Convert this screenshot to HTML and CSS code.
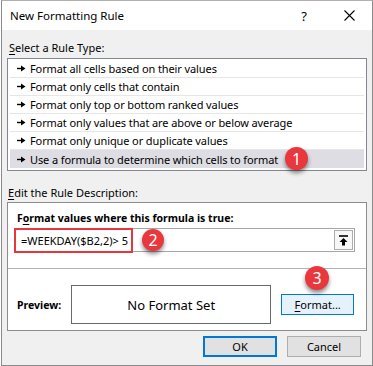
FILE: index.html
```html
<!DOCTYPE html>
<html>
    <head>
        <title>New Formatting Rule</title>
        <link rel="stylesheet" href="styles.css">
    </head>
    <body>
        <div class="dialog">
            <div class="titlebar">
                <span class="title">New Formatting Rule</span>
                <span class="tb-btn help">?</span>
                <span class="tb-btn close">
                    <svg width="11" height="11" viewBox="0 0 11 11"><path d="M0.5 0.5L10.5 10.5M10.5 0.5L0.5 10.5" stroke="#000" stroke-width="1.1"/></svg>
                </span>
            </div>
            <div class="content">
                <div class="label label-first"><u>S</u>elect a Rule Type:</div>
                <div class="rule-list">
                    <div class="rule">
                        <svg class="arrow" width="9" height="7" viewBox="0 0 9 7"><path d="M0 3.5H5" stroke="#000" stroke-width="1.4"/><path d="M4 0.5L8.5 3.5L4 6.5Z" fill="#000"/></svg>
                        <span>Format all cells based on their values</span>
                    </div>
                    <div class="rule">
                        <svg class="arrow" width="9" height="7" viewBox="0 0 9 7"><path d="M0 3.5H5" stroke="#000" stroke-width="1.4"/><path d="M4 0.5L8.5 3.5L4 6.5Z" fill="#000"/></svg>
                        <span>Format only cells that contain</span>
                    </div>
                    <div class="rule">
                        <svg class="arrow" width="9" height="7" viewBox="0 0 9 7"><path d="M0 3.5H5" stroke="#000" stroke-width="1.4"/><path d="M4 0.5L8.5 3.5L4 6.5Z" fill="#000"/></svg>
                        <span>Format only top or bottom ranked values</span>
                    </div>
                    <div class="rule">
                        <svg class="arrow" width="9" height="7" viewBox="0 0 9 7"><path d="M0 3.5H5" stroke="#000" stroke-width="1.4"/><path d="M4 0.5L8.5 3.5L4 6.5Z" fill="#000"/></svg>
                        <span>Format only values that are above or below average</span>
                    </div>
                    <div class="rule">
                        <svg class="arrow" width="9" height="7" viewBox="0 0 9 7"><path d="M0 3.5H5" stroke="#000" stroke-width="1.4"/><path d="M4 0.5L8.5 3.5L4 6.5Z" fill="#000"/></svg>
                        <span>Format only unique or duplicate values</span>
                    </div>
                    <div class="rule selected">
                        <svg class="arrow" width="9" height="7" viewBox="0 0 9 7"><path d="M0 3.5H5" stroke="#000" stroke-width="1.4"/><path d="M4 0.5L8.5 3.5L4 6.5Z" fill="#000"/></svg>
                        <span>Use a formula to determine which cells to format</span>
                        <span class="badge badge-1">1</span>
                    </div>
                </div>

                <div class="label label-second"><u>E</u>dit the Rule Description:</div>
                <div class="desc-box">
                    <div class="formula-part">
                        <div class="bold-label">F<u>o</u>rmat values where this formula is true:</div>
                        <div class="formula-input">
                            <span class="formula-text">=WEEKDAY($B2,2)&gt; 5</span>
                            <span class="ref-btn">
                                <svg width="11" height="11" viewBox="0 0 11 11"><path d="M1 1H10" stroke="#000" stroke-width="1.6"/><path d="M5.5 3L1.5 7H4V10.5H7V7H9.5Z" fill="#000"/></svg>
                            </span>
                            <span class="highlight"></span>
                            <span class="badge badge-2">2</span>
                        </div>
                    </div>
                    <div class="preview-part">
                        <span class="bold-label">Preview:</span>
                        <div class="preview-box">No Format Set</div>
                        <button class="btn btn-format"><u>F</u>ormat...</button>
                        <span class="badge badge-3">3</span>
                    </div>
                </div>

                <div class="footer">
                    <button class="btn btn-default">OK</button>
                    <button class="btn">Cancel</button>
                </div>
            </div>
        </div>
    </body>
</html>
```
FILE: styles.css
```css
body {
    margin: 0;
    background-color: #ffffff;
    font-family: 'Noto Sans', 'Liberation Sans', sans-serif;
    font-size: 11px;
    color: #000000;
}
u {
    text-decoration-thickness: 1px;
    text-underline-offset: 2px;
}


.dialog {
    position: relative;
    width: 370px;
    height: 364px;
    margin-left: 1px;
    border: 1px solid #8a8a8a;
    border-top-color: #b0b0b0;
    background-color: #f0f0f0;
}
.titlebar {
    display: flex;
    align-items: center;
    height: 29px;
    padding-left: 8px;
    background-color: #ffffff;
}
.title {
    flex: 1;
    font-size: 11.5px;
}
.tb-btn {
    display: flex;
    align-items: center;
    justify-content: center;
    height: 29px;
}
.help {
    width: 44px;
    font-size: 13px;
}
.close {
    width: 46px;
}


.content {
    padding: 0 5px;
}
.label {
    line-height: 16px;
    padding-left: 2px;
}
.label-first {
    margin-top: 10px;
    margin-bottom: 2px;
}
.label-second {
    margin-top: 14px;
    margin-bottom: 1px;
    padding-left: 1px;
}


.rule-list {
    background-color: #ffffff;
    border: 1px solid #828790;
    padding: 1px 2px 2px;
}
.rule {
    position: relative;
    display: flex;
    align-items: center;
    gap: 4px;
    height: 17px;
    padding-left: 7px;
    border-bottom: 1px solid #e6e6e6;
    letter-spacing: -0.1px;
}
.rule.selected {
    height: 18px;
    border-bottom: none;
    background-color: #dddde3;
}
.arrow {
    flex: none;
}


.desc-box {
    background-color: #ffffff;
    border: 1px solid #8c8c8c;
}
.bold-label {
    font-weight: bold;
    font-size: 10.5px;
    line-height: 16px;
}
.formula-part {
    padding: 7px 11px 16px 6px;
}
.formula-part > .bold-label {
    padding-left: 3px;
    margin-bottom: 2px;
}
.formula-input {
    position: relative;
    display: flex;
    align-items: center;
    height: 22px;
    border: 1px solid #a6a6a6;
}
.formula-text {
    flex: 1;
    padding-left: 6px;
}
.ref-btn {
    display: flex;
    align-items: center;
    justify-content: center;
    width: 19px;
    height: 20px;
    margin-right: 1px;
    border: 1px solid #adadad;
    box-sizing: border-box;
    background-color: #f7f7f7;
}
.highlight {
    position: absolute;
    left: -1px;
    top: -1px;
    width: 115px;
    height: 21px;
    border: 2px solid #e8373c;
}


.preview-part {
    position: relative;
    display: flex;
    align-items: center;
    gap: 10px;
    padding: 16px 0 6px 9px;
    border-top: 1px solid #b4b4b4;
}
.preview-box {
    display: flex;
    align-items: center;
    justify-content: center;
    width: 198px;
    height: 37px;
    border: 1px solid #696969;
    font-size: 13px;
}


.btn {
    height: 21px;
    width: 74px;
    padding: 0;
    font-family: inherit;
    font-size: 11px;
    color: #000000;
    background-color: #e1e1e1;
    border: 1px solid #adadad;
}
.btn-format {
    width: 73px;
    background-color: #e5f1fb;
    border-color: #0078d7;
}
.btn-default {
    border: 2px solid #0078d7;
}
.footer {
    display: flex;
    justify-content: flex-end;
    gap: 10px;
    margin-top: 5px;
    padding-right: 6px;
}


.badge {
    position: absolute;
    display: flex;
    align-items: center;
    justify-content: center;
    border-radius: 50%;
    background-color: #e8383d;
    color: #ffffff;
    font-size: 16px;
    letter-spacing: 0;
    box-shadow: 0 3px 4px rgba(0, 0, 0, 0.45);
}
.badge-1 {
    left: 275px;
    top: -3px;
    width: 23px;
    height: 23px;
}
.badge-2 {
    left: 127px;
    top: 0px;
    width: 22px;
    height: 22px;
}
.badge-3 {
    left: 297px;
    top: -3px;
    width: 24px;
    height: 24px;
}
```
